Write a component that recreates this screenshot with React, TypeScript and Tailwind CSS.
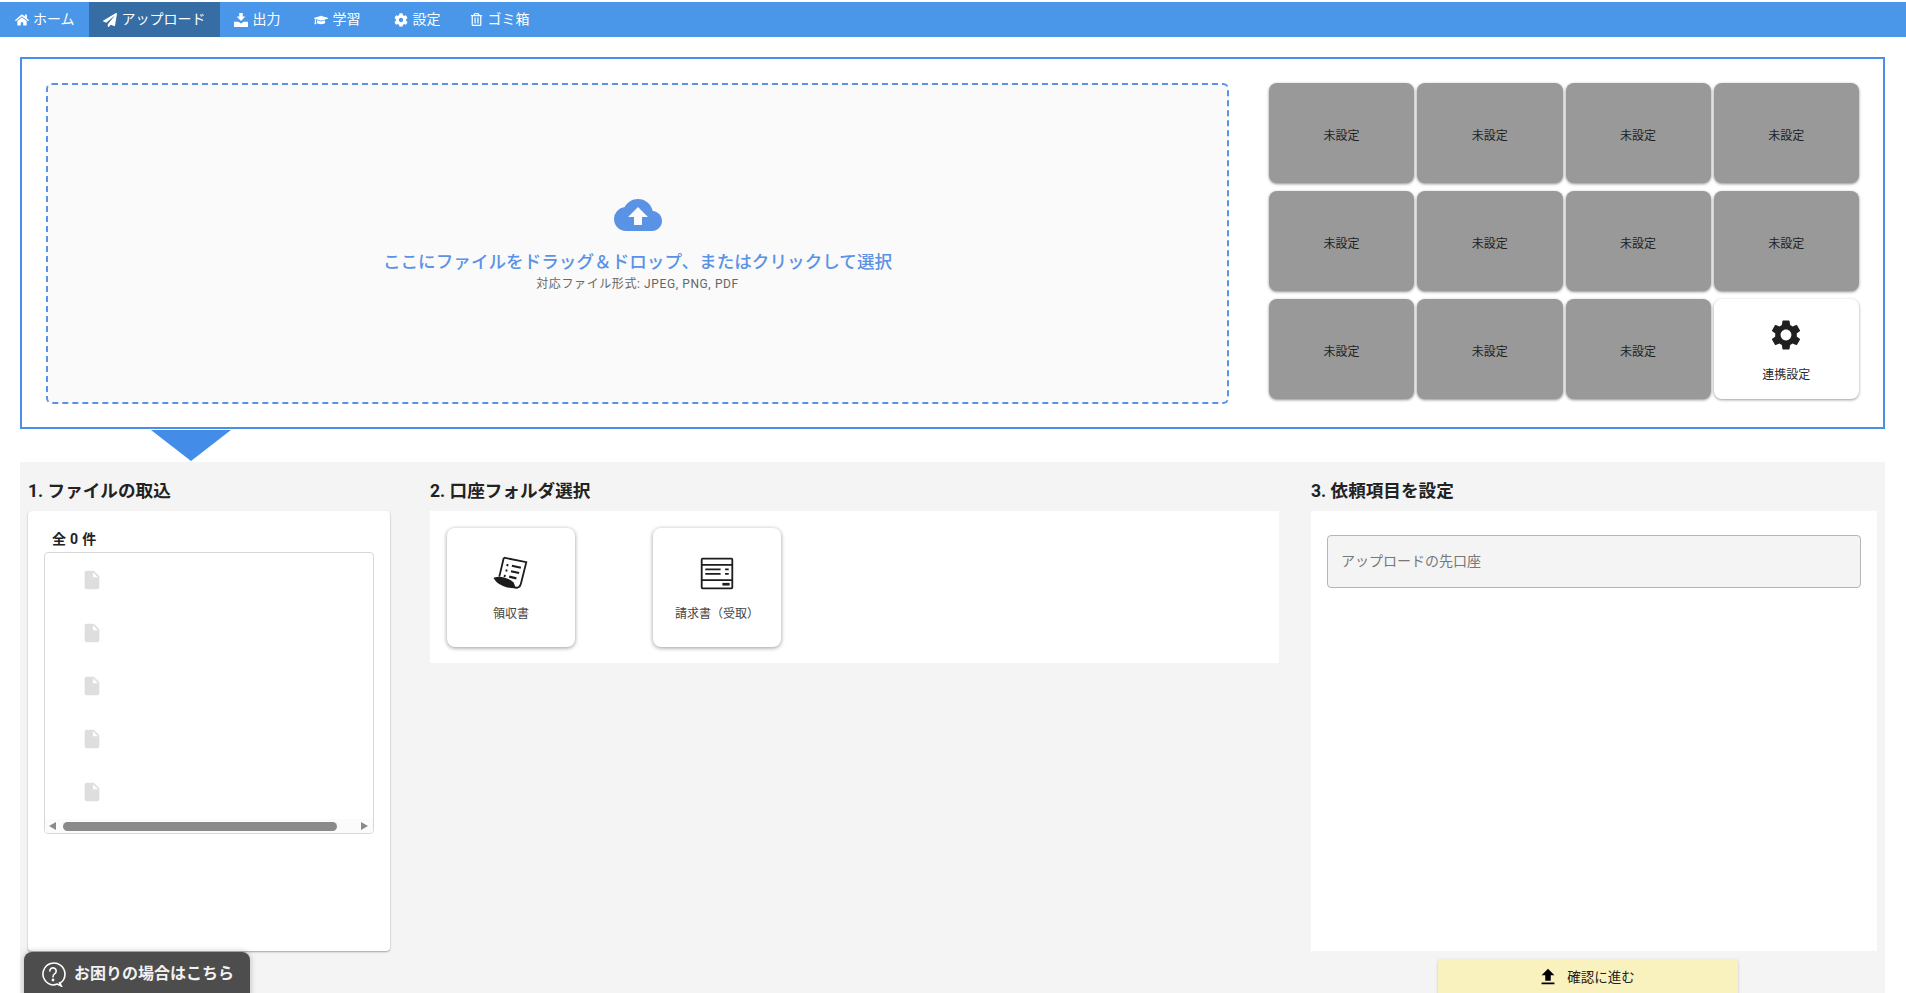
import { FaHome, FaPaperPlane, FaGraduationCap, FaCog, FaRegTrashAlt } from "react-icons/fa";
import { MdSettings, MdFileUpload, MdInsertDriveFile, MdCloudUpload } from "react-icons/md";

const font = "font-['Roboto','Noto_Sans_CJK_JP',sans-serif]";
const heading = "h-[31px] text-[17.6px] leading-[22px] font-bold text-[#222222]";

function OutputIcon() {
  return (
    <svg viewBox="0 0 16 16" className="w-[14px] h-[14px]" fill="currentColor">
      <path d="M6 0h4v4h3L8 9 3 4h3z" />
      <path d="M0 10h5l3 2 3-2h5v6H0z" />
    </svg>
  );
}

function NavItem({ icon, label, active, className = "" }: { icon: React.ReactNode; label: string; active?: boolean; className?: string }) {
  return (
    <div className={`h-full flex items-center gap-[4px] px-[14px] text-[14px] text-white ${active ? "bg-[#366da5]" : ""} ${className}`}>
      <span className="flex w-[15px] justify-center">{icon}</span>
      <span>{label}</span>
    </div>
  );
}

function Tile({ label }: { label: string }) {
  return (
    <div className="flex items-center justify-center rounded-lg bg-[#999999] pt-[5px] text-[12px] text-[#1f1f1f] shadow-[0_1px_3px_rgba(0,0,0,0.45)]">
      {label}
    </div>
  );
}

function ReceiptIcon() {
  return (
    <svg viewBox="0 0 40 40" className="w-[36px] h-[36px]" fill="none" stroke="#1c1c1c" strokeWidth="2">
      <path d="M12 3l25 5-6 24c-1 4-4 5-7 4" />
      <path d="M12 3L7 24" />
      <path d="M2 26c6-2 14 0 20 5l2 5c-8 0-18-3-22-10z" fill="#1c1c1c" />
      <path d="M15 11l2 .5M21 12l10 2.2M14 17l2 .5M20 18l9 2M12 23l2 .5M18 24l8 2" strokeWidth="2.4" />
    </svg>
  );
}

function InvoiceIcon() {
  return (
    <svg viewBox="0 0 40 40" className="w-[36px] h-[36px]" fill="none" stroke="#1c1c1c" strokeWidth="2">
      <rect x="3" y="4" width="34" height="33" rx="1" />
      <path d="M3 11h34M3 28h34" />
      <path d="M7 16h17M7 21h17M29 16h4M29 21h4" />
      <path d="M26 32.5h8" strokeWidth="3" />
    </svg>
  );
}

function FolderCard({ icon, label }: { icon: React.ReactNode; label: string }) {
  return (
    <div className="w-[128px] h-[119px] flex flex-col items-center rounded-lg bg-white pt-[27px] shadow-[0_1px_4px_rgba(0,0,0,0.4)]">
      {icon}
      <p className="mt-[14px] text-[12px] text-[#444444]">{label}</p>
    </div>
  );
}

function HelpIcon() {
  return (
    <svg viewBox="0 0 26 26" className="w-[26px] h-[26px]" fill="none" stroke="white" strokeWidth="1.6">
      <path d="M21 21.5A11 11 0 1 0 13 24c1.6 0 3-.3 4.3-.9l4 1.9-1.7-3z" />
      <path d="M9.8 10a3.2 3.2 0 1 1 5 2.7c-1.2.8-1.8 1.4-1.8 3" strokeLinecap="round" />
      <circle cx="13" cy="19" r="0.6" fill="white" />
    </svg>
  );
}

export default function App() {
  const tiles = Array.from({ length: 11 });
  const files = Array.from({ length: 5 });

  return (
    <div className={`relative h-screen overflow-hidden bg-white pt-[2px] ${font}`}>
      <header className="h-[35px] flex items-center bg-[#4a96e8]">
        <NavItem icon={<FaHome size={14} />} label="ホーム" />
        <NavItem icon={<FaPaperPlane size={14} />} label="アップロード" active />
        <NavItem icon={<OutputIcon />} label="出力" />
        <NavItem icon={<FaGraduationCap size={14} />} label="学習" className="ml-[5px]" />
        <NavItem icon={<FaCog size={14} />} label="設定" className="ml-[5px]" />
        <NavItem icon={<FaRegTrashAlt size={13} />} label="ゴミ箱" />
      </header>

      <div className="mt-[20px] ml-[20px] mr-[21px] h-[372px] flex border-2 border-[#4a8fe8] px-[24px] pt-[24px]">
        <div className="w-[1183px] h-[321px] flex flex-col items-center rounded-md border-2 border-dashed border-[#5a92e6] bg-[#fafafa] pt-[106px]">
          <MdCloudUpload size={48} className="text-[#5a92e6]" />
          <p className="mt-[11px] text-[17.6px] leading-[24px] font-medium text-[#5a92e6]">ここにファイルをドラッグ＆ドロップ、またはクリックして選択</p>
          <p className="mt-[1px] text-[12px] leading-[18px] tracking-[0.6px] text-[#666666]">対応ファイル形式: JPEG, PNG, PDF</p>
        </div>
        <div className="ml-[40px] w-[590px] h-[316px] grid grid-cols-4 grid-rows-3 gap-x-[3px] gap-y-[8px]">
          {tiles.map((_, i) => (
            <Tile key={i} label="未設定" />
          ))}
          <div className="flex flex-col items-center rounded-lg bg-white pt-[18px] shadow-[0_1px_3px_rgba(0,0,0,0.4)]">
            <MdSettings size={36} className="text-[#1f1f1f]" />
            <p className="mt-[13px] text-[12px] leading-[18px] text-[#2a2a2a]">連携設定</p>
          </div>
        </div>
      </div>

      <div className="ml-[151px] mt-px h-0 w-0 border-x-[40px] border-t-[31px] border-x-transparent border-t-[#438de8]" />

      <main className="mt-px ml-[20px] mr-[21px] h-[532px] flex bg-[#f4f4f4] px-[8px] pt-[18px]">
        <section className="w-[362px]">
          <h2 className={heading}>1. ファイルの取込</h2>
          <div className="h-[440px] rounded bg-white px-[16px] pt-[18px] shadow-[0_1px_2px_rgba(0,0,0,0.35)]">
            <p className="pl-[8px] h-[23px] text-[14px] leading-[20px] tracking-[0.3px] font-bold text-[#222222]">全 0 件</p>
            <div className="h-[282px] rounded border border-[#d8d8d8] flex flex-col overflow-hidden">
              <div className="flex-1 pl-[36px] pt-[16px] flex flex-col gap-[31px]">
                {files.map((_, i) => (
                  <MdInsertDriveFile key={i} size={22} className="text-[#dedede]" />
                ))}
              </div>
              <div className="h-[14px] flex items-center bg-[#fbfbfb]">
                <div className="ml-[4px] h-0 w-0 border-y-[4.5px] border-r-[7px] border-y-transparent border-r-[#8a8a8a]" />
                <div className="ml-[7px] w-[274px] h-[9px] rounded-full bg-[#8a8a8a]" />
                <div className="ml-auto mr-[5px] h-0 w-0 border-y-[4.5px] border-l-[7px] border-y-transparent border-l-[#8a8a8a]" />
              </div>
            </div>
          </div>
        </section>

        <section className="ml-[40px] w-[849px]">
          <h2 className={heading}>2. 口座フォルダ選択</h2>
          <div className="h-[152px] flex gap-[78px] bg-white pl-[17px] pt-[17px]">
            <FolderCard icon={<ReceiptIcon />} label="領収書" />
            <FolderCard icon={<InvoiceIcon />} label="請求書（受取）" />
          </div>
        </section>

        <section className="ml-[32px] w-[566px]">
          <h2 className={heading}>3. 依頼項目を設定</h2>
          <div className="h-[440px] bg-white px-[16px] pt-[24px]">
            <div className="h-[53px] flex items-center rounded border border-[#b5b5b5] bg-[#f4f4f4] px-[13px] text-[14px] text-[#777777]">
              アップロードの先口座
            </div>
          </div>
          <div className="mt-[8px] ml-[127px] w-[300px] h-[50px] flex items-center justify-center gap-[8px] rounded bg-[#f9f2bf] pb-[16px] pt-[2px] pr-[4px] text-[13.5px] text-[#222222] shadow-[0_1px_3px_rgba(0,0,0,0.2)]">
            <MdFileUpload size={22} className="text-black" />
            <span>確認に進む</span>
          </div>
        </section>
      </main>

      <div className="absolute left-[24px] top-[952px] w-[226px] h-[50px] flex items-start gap-[8px] rounded-t-lg bg-[#4d4d4d] pl-[16px] pt-[9px] shadow-[0_0_6px_rgba(0,0,0,0.25)]">
        <HelpIcon />
        <span className="text-[16px] leading-[26px] font-bold text-[#f2f2f2]">お困りの場合はこちら</span>
      </div>
    </div>
  );
}
